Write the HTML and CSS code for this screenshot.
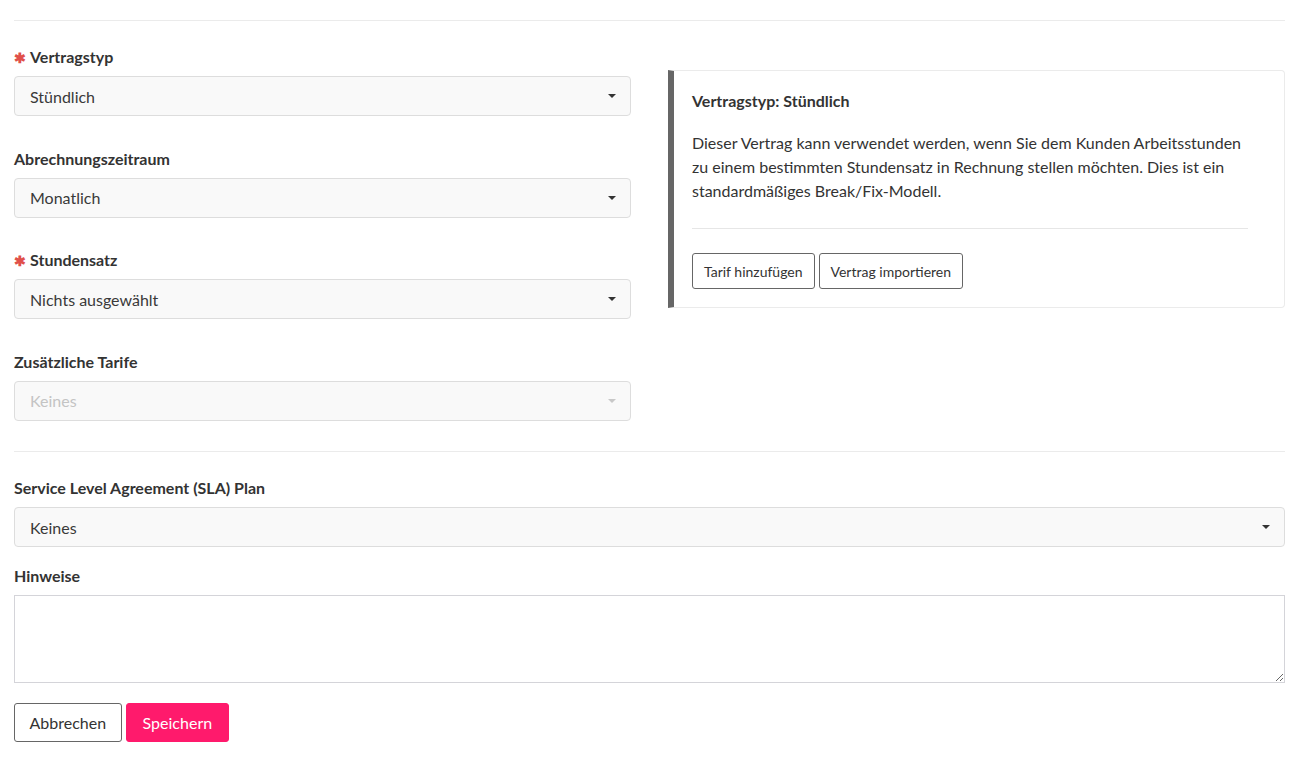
FILE: index.html
```html
<!DOCTYPE html>
<html lang="de">
  <head>
    <meta charset="UTF-8" />
    <meta name="viewport" content="width=device-width, initial-scale=1.0" />
    <title>Vertrag</title>
    <link rel="stylesheet" href="styles.css">
  </head>
  <body>
    <main class="page">
      <hr class="divider top-divider" />

      <div class="row">
        <div class="col">
          <div class="form-group">
            <label class="label"><span class="req">✱</span>Vertragstyp</label>
            <div class="select"><span>Stündlich</span><i class="caret"></i></div>
          </div>
          <div class="form-group">
            <label class="label">Abrechnungszeitraum</label>
            <div class="select"><span>Monatlich</span><i class="caret"></i></div>
          </div>
          <div class="form-group">
            <label class="label"><span class="req">✱</span>Stundensatz</label>
            <div class="select"><span>Nichts ausgewählt</span><i class="caret"></i></div>
          </div>
          <div class="form-group last">
            <label class="label">Zusätzliche Tarife</label>
            <div class="select disabled"><span>Keines</span><i class="caret"></i></div>
          </div>
        </div>

        <div class="col">
          <div class="info-box">
            <h4 class="info-title">Vertragstyp: Stündlich</h4>
            <p class="info-text">Dieser Vertrag kann verwendet werden, wenn Sie dem Kunden Arbeitsstunden zu einem bestimmten Stundensatz in Rechnung stellen möchten. Dies ist ein standardmäßiges Break/Fix-Modell.</p>
            <hr class="info-divider" />
            <div class="info-actions">
              <button class="btn btn-sm">Tarif hinzufügen</button>
              <button class="btn btn-sm">Vertrag importieren</button>
            </div>
          </div>
        </div>
      </div>

      <hr class="divider mid-divider" />

      <div class="form-group sla">
        <label class="label">Service Level Agreement (SLA) Plan</label>
        <div class="select"><span>Keines</span><i class="caret"></i></div>
      </div>

      <div class="form-group notes">
        <label class="label">Hinweise</label>
        <textarea class="textarea"></textarea>
      </div>

      <div class="actions">
        <button class="btn">Abbrechen</button>
        <button class="btn btn-primary">Speichern</button>
      </div>
    </main>
  </body>
</html>
```

FILE: styles.css
```css
* {
  box-sizing: border-box;
}
body {
  margin: 0;
  background-color: #ffffff;
  color: #333333;
  font-family: "Lato", "Noto Sans", sans-serif;
  font-size: 16px;
}
.page {
  width: 1285px;
  padding: 20px 0 0 14px;
}
.divider {
  margin: 0;
  border: 0;
  border-top: 1px solid #ebebeb;
}
.top-divider {
  margin-bottom: 24px;
}
.row {
  display: grid;
  grid-template-columns: 617px 617px;
  column-gap: 37px;
}
.form-group {
  margin-bottom: 30.5px;
}
.label {
  display: block;
  height: 24px;
  font-weight: 700;
  line-height: 24px;
  margin-bottom: 7px;
  color: #333333;
}
.req {
  display: inline-block;
  width: 9px;
  margin-right: 7px;
  color: #e0504a;
  font-size: 14px;
  line-height: 0;
  vertical-align: 0;
}
.select {
  display: flex;
  align-items: center;
  justify-content: space-between;
  height: 40px;
  padding: 0 14px 0 15px;
  background-color: #f9f9f9;
  border: 1px solid #dddddd;
  border-radius: 4px;
  color: #3a3a3a;
}
.caret {
  width: 0;
  height: 0;
  border-left: 4px solid transparent;
  border-right: 4px solid transparent;
  border-top: 4px solid #333333;
}
.select.disabled {
  color: #c4c4c4;
}
.select.disabled .caret {
  border-top-color: #c8c8c8;
}
.mid-divider {
  margin-bottom: 24px;
}
.sla {
  margin-bottom: 17px;
}
.notes {
  margin-bottom: 20px;
}
.textarea {
  display: block;
  width: 100%;
  height: 88px;
  border: 1px solid #d4d4d9;
  border-radius: 0;
  resize: vertical;
  font-family: inherit;
}
.info-box {
  margin-top: 25px;
  border: 1px solid #ebebeb;
  border-left: 6px solid #666666;
  border-radius: 0 4px 4px 0;
  padding: 18px 36px 18px 18px;
}
.info-title {
  margin: 0 0 18px;
  font-size: 16px;
  line-height: 24px;
  font-weight: 700;
}
.info-text {
  margin: 0;
  line-height: 24px;
  color: #333333;
}
.info-divider {
  margin: 25px 0 24px;
  border: 0;
  border-top: 1px solid #e6e6e6;
}
.info-actions {
  display: flex;
  gap: 4px;
}
.btn {
  height: 39px;
  padding: 0 14.5px;
  background-color: #ffffff;
  border: 1px solid #666666;
  border-radius: 3px;
  color: #333333;
  font-family: inherit;
  font-size: 16px;
  cursor: pointer;
}
.btn-sm {
  height: 36px;
  padding: 0 11px;
  font-size: 14px;
}
.btn-primary {
  padding: 0 16px;
  background-color: #ff1a6c;
  border-color: #ff1a6c;
  color: #ffffff;
}
.actions {
  display: flex;
  gap: 4px;
}
```
